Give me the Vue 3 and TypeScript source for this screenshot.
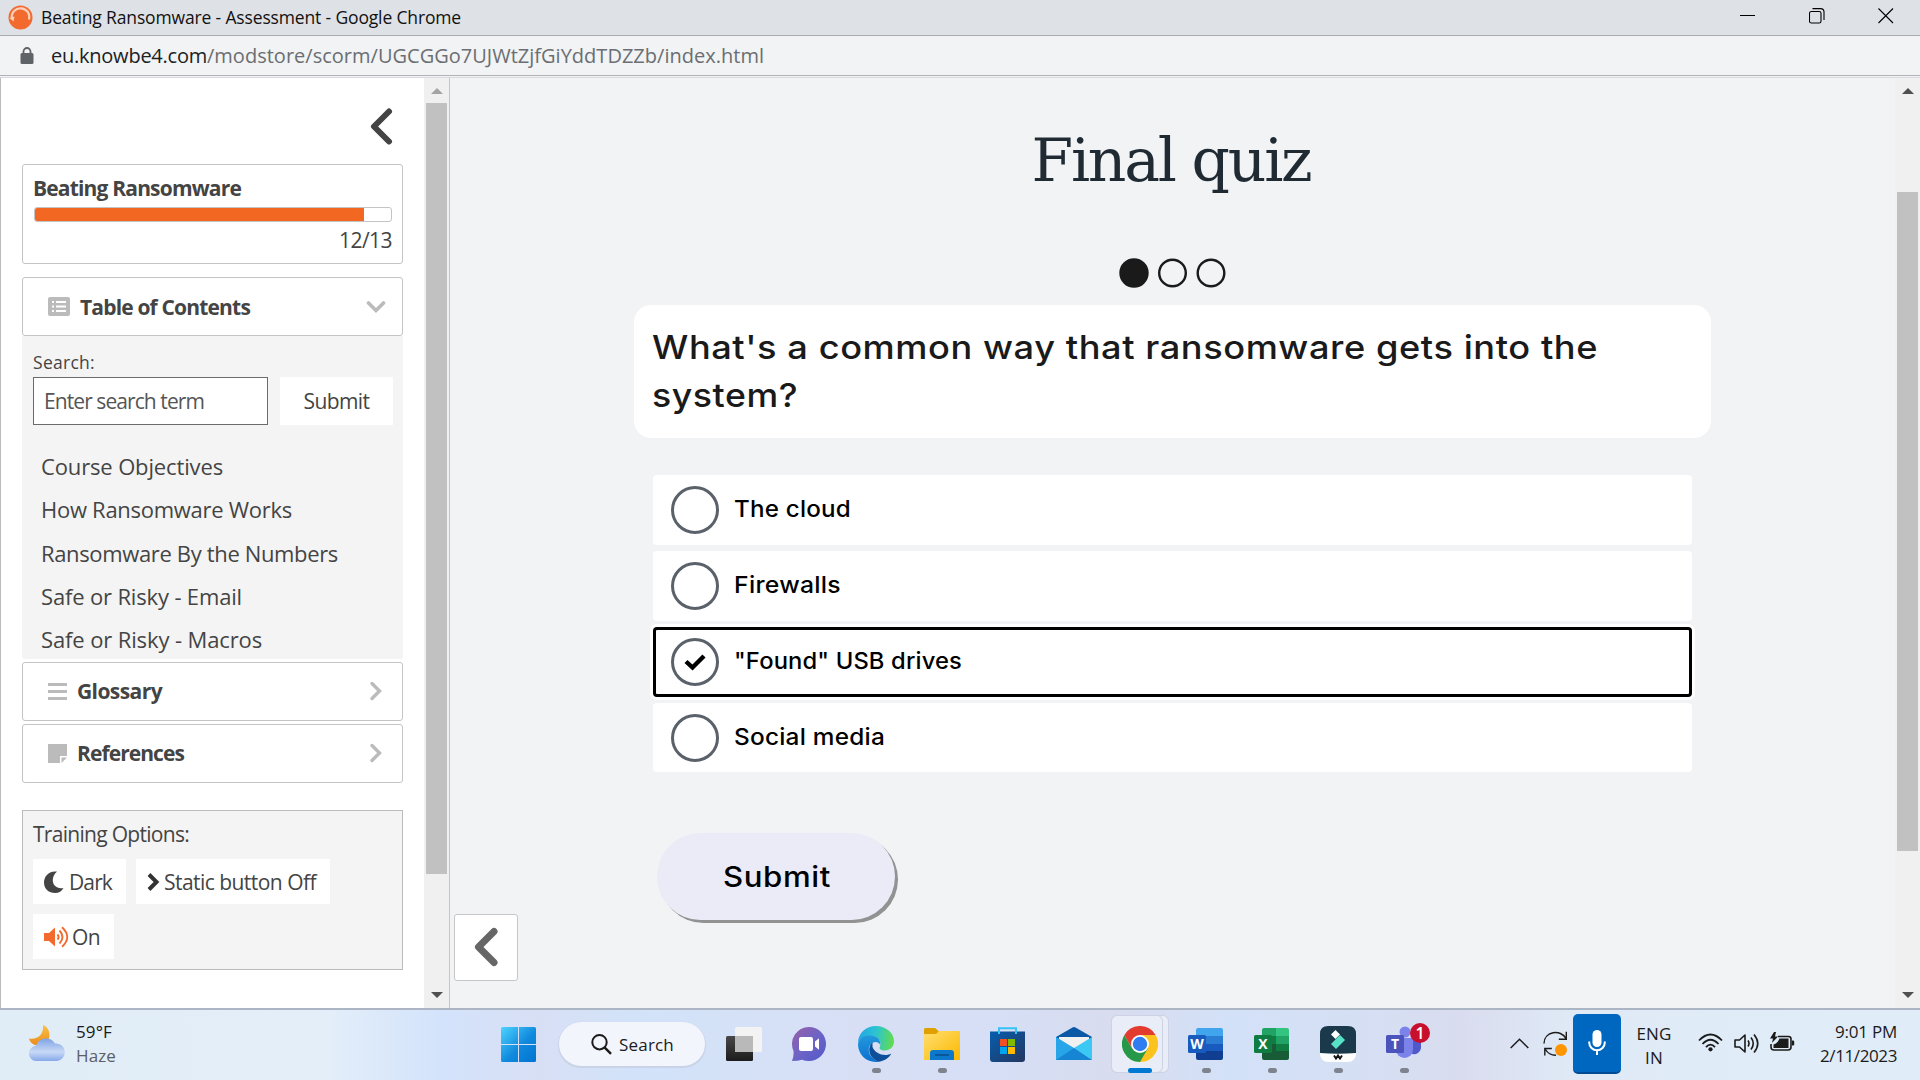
<script setup lang="ts">
import type { Directive } from 'vue'

interface Answer {
  label: string
  width: number
  checked: boolean
}

interface Lesson {
  title: string
  width: number
}

/*
 * Makes a label fill the given number of pixels by tracking its letters.
 * With the "stretch" modifier most of the difference goes into wider glyphs.
 */
const vFit: Directive<HTMLElement, number, 'stretch'> = {
  mounted(el, { value, modifiers }) {
    const count = (el.textContent ?? '').length
    const natural = el.getBoundingClientRect().width
    if (count === 0 || natural === 0) return
    const scale = modifiers.stretch ? 1 + (value / natural - 1) * 0.75 : 1
    el.style.letterSpacing = `${(value / scale - natural) / count}px`
    if (modifiers.stretch) {
      el.style.transformOrigin = '0 50%'
      el.style.transform = `scaleX(${scale})`
    }
  },
}

const lessons: Lesson[] = [
  { title: 'Course Objectives', width: 182 },
  { title: 'How Ransomware Works', width: 251 },
  { title: 'Ransomware By the Numbers', width: 297 },
  { title: 'Safe or Risky - Email', width: 201 },
  { title: 'Safe or Risky - Macros', width: 221 },
]

const answers: Answer[] = [
  { label: 'The cloud', width: 117, checked: false },
  { label: 'Firewalls', width: 107, checked: false },
  { label: '"Found" USB drives', width: 228, checked: true },
  { label: 'Social media', width: 151, checked: false },
]

const progress = { done: 12, total: 13 }
const percent = `${(progress.done / progress.total) * 100}%`
</script>

<template>
  <div class="window">
    <header class="titlebar">
      <svg class="favicon" width="25" height="25" viewBox="0 0 25 25">
        <circle cx="12.5" cy="12.5" r="12" fill="#f26a2e" />
        <path d="M4 14C2.600 7 8 3 13 3.300C19 3.600 22.300 9 21 14.500" fill="none" stroke="#fbd0bb" stroke-width="2.200" />
        <path d="M1.500 13l5-1.500-1 5z" fill="#fbd0bb" />
      </svg>
      <span v-fit="420" class="window-title">Beating Ransomware - Assessment - Google Chrome</span>
      <div class="window-buttons">
        <svg width="16" height="16" viewBox="0 0 16 16"><path d="M0 7.500h15" stroke="#000" /></svg>
        <svg width="16" height="16" viewBox="0 0 16 16" fill="none" stroke="#000" stroke-width="1.100">
          <rect x=".5" y="3.500" width="11.500" height="11.500" rx="1.800" />
          <path d="M3.500 .6H11.500Q15 .6 15 4V12" />
        </svg>
        <svg width="16" height="16" viewBox="0 0 16 16"><path d="M.5 .5l14.500 14.500M15 .5L.5 15" stroke="#000" stroke-width="1.100" /></svg>
      </div>
    </header>

    <div class="address">
      <svg width="14" height="18" viewBox="0 0 14 18">
        <path d="M3.500 7V4.500a3.500 3.500 0 0 1 7 0V7" fill="none" stroke="#5f6368" stroke-width="1.800" />
        <rect x=".5" y="6" width="13" height="11" rx="1.500" fill="#5f6368" />
      </svg>
      <span v-fit="156" class="host">eu.knowbe4.com</span>
      <span v-fit="557" class="path">/modstore/scorm/UGCGGo7UJWtZjfGiYddTDZZb/index.html</span>
    </div>

    <div class="body">
      <aside class="sidebar">
        <div class="collapse">
          <svg width="24" height="37" viewBox="0 0 24 37"><path d="M20 3.500L5 18.500l15 15" fill="none" stroke="#444" stroke-width="6" stroke-linecap="round" stroke-linejoin="round" /></svg>
        </div>

        <section class="card progress-card">
          <div><b v-fit="208" class="fit">Beating Ransomware</b></div>
          <div class="bar"><div class="bar-fill" :style="{ width: percent }"></div></div>
          <div class="count"><span v-fit="53" class="fit">{{ progress.done }}/{{ progress.total }}</span></div>
        </section>

        <section class="card heading toc">
          <svg width="22" height="19" viewBox="0 0 22 19">
            <rect width="22" height="19" rx="2" fill="#bbb" />
            <path d="M4 5h2M4 9.500h2M4 14h2M8 5h10M8 9.500h10M8 14h10" stroke="#fff" stroke-width="2.200" />
          </svg>
          <b v-fit="170" class="fit">Table of Contents</b>
          <svg class="arrow" width="20" height="14" viewBox="0 0 20 14"><path d="M2.500 3L10 10.500 17.500 3" fill="none" stroke="#bbb" stroke-width="3.600" stroke-linecap="round" /></svg>
        </section>

        <section class="panel">
          <div class="search-label"><span v-fit="62" class="fit">Search:</span></div>
          <div class="search-row">
            <div class="input"><span v-fit="160" class="fit">Enter search term</span></div>
            <div class="search-submit"><span v-fit="66" class="fit">Submit</span></div>
          </div>
          <ul class="lessons">
            <li v-for="lesson in lessons" :key="lesson.title"><span v-fit="lesson.width" class="fit">{{ lesson.title }}</span></li>
          </ul>
        </section>

        <section class="card heading glossary">
          <svg width="19" height="17" viewBox="0 0 19 17"><path d="M0 1.500h19M0 8.500h19M0 15.500h19" stroke="#bbb" stroke-width="2.800" /></svg>
          <b v-fit="85" class="fit">Glossary</b>
          <svg class="arrow" width="14" height="20" viewBox="0 0 14 20"><path d="M3 2.500L10.500 10 3 17.500" fill="none" stroke="#bbb" stroke-width="3.400" stroke-linecap="round" /></svg>
        </section>
        <section class="card heading references">
          <svg width="19" height="19" viewBox="0 0 19 19"><path d="M0 0h19v12h-7v7H0zM13.500 13.500H19L13.500 19z" fill="#bbb" /></svg>
          <b v-fit="107" class="fit">References</b>
          <svg class="arrow" width="14" height="20" viewBox="0 0 14 20"><path d="M3 2.500L10.500 10 3 17.500" fill="none" stroke="#bbb" stroke-width="3.400" stroke-linecap="round" /></svg>
        </section>

        <section class="options">
          <div class="options-title"><span v-fit="156" class="fit">Training Options:</span></div>
          <div class="option-row">
            <div class="option">
              <svg width="20" height="22" viewBox="0 0 20 22"><path d="M13 .5C4-.5 0 6 0 11.500C0 18 5 22 11 22C15 22 18 20 19.500 17C9 19 5 8 13 .5z" fill="#444" /></svg>
              <span v-fit="43" class="fit dark">Dark</span>
            </div>
            <div class="option">
              <svg width="13" height="20" viewBox="0 0 13 20"><path d="M2 2.500L9.500 10 2 17.500" fill="none" stroke="#333" stroke-width="4" /></svg>
              <span v-fit="152" class="fit static">Static button Off</span>
            </div>
            <div class="option">
              <svg width="25" height="22" viewBox="0 0 25 22" fill="none" stroke="#f26a2e" stroke-width="1.900">
                <path d="M0 7h5l6-5.500v19L5 15H0z" fill="#f26a2e" stroke="none" />
                <path d="M13.500 8.300q2.300 2.700 0 5.400M15.500 4.500q6 6.500 0 13M18 1.200q10.500 9.800 0 19.600" />
              </svg>
              <span v-fit="28" class="fit on">On</span>
            </div>
          </div>
        </section>
      </aside>

      <div class="scrollbar side-scroll">
        <i class="up"></i>
        <i class="thumb"></i>
        <i class="down"></i>
      </div>

      <main class="main">
        <h1><span v-fit="279" class="fit">Final quiz</span></h1>
        <svg class="steps" width="107" height="30" viewBox="0 0 107 30" fill="none" stroke="#1a1a1a" stroke-width="2.400">
          <circle cx="15" cy="15" r="13.500" fill="#1a1a1a" />
          <circle cx="53.500" cy="15" r="13.300" />
          <circle cx="92" cy="15" r="13.300" />
        </svg>
        <div class="question">
          <div><span v-fit.stretch="946" class="fit">What's a common way that ransomware gets into the</span></div>
          <div><span v-fit.stretch="146" class="fit">system?</span></div>
        </div>
        <div class="answers">
          <div v-for="answer in answers" :key="answer.label" class="answer" :class="{ selected: answer.checked }">
            <span class="radio">
              <svg v-if="answer.checked" width="22" height="17" viewBox="0 0 22 17"><path d="M2 7.500l6.500 6L20 2" fill="none" stroke="#000" stroke-width="4.400" /></svg>
            </span>
            <span v-fit.stretch="answer.width" class="fit">{{ answer.label }}</span>
          </div>
        </div>
        <div class="submit"><span v-fit.stretch="108" class="fit">Submit</span></div>
        <div class="prev">
          <svg width="26" height="40" viewBox="0 0 26 40"><path d="M21 4.500L5.500 20 21 35.500" fill="none" stroke="#666" stroke-width="7" stroke-linecap="round" stroke-linejoin="round" /></svg>
        </div>
      </main>

      <div class="scrollbar main-scroll">
        <i class="up"></i>
        <i class="thumb"></i>
        <i class="down"></i>
      </div>
    </div>

    <footer class="taskbar">
      <div class="weather">
        <svg width="37" height="37" viewBox="0 0 37 37">
          <defs>
            <linearGradient id="moon" x1="0" y1="0" x2="0" y2="1"><stop offset="0" stop-color="#f7c344" /><stop offset="1" stop-color="#ed8a1c" /></linearGradient>
            <linearGradient id="cloud" x1="0" y1="0" x2="0" y2="1"><stop offset="0" stop-color="#7fa3e4" /><stop offset=".6" stop-color="#c8d9f6" /><stop offset="1" stop-color="#86a9ea" /></linearGradient>
          </defs>
          <path d="M14 0C22 3 23 15 15 19.500C8 22.500 1 19 0 13.500C8 15 15 10 14 0z" fill="url(#moon)" />
          <path d="M8 36A7.600 7.600 0 0 1 7 20.800A10.500 10.500 0 0 1 26 18.500A8.800 8.800 0 0 1 28 36z" fill="url(#cloud)" />
        </svg>
        <div class="weather-text">
          <div><span v-fit="36" class="fit">59°F</span></div>
          <div class="muted"><span v-fit="40" class="fit">Haze</span></div>
        </div>
      </div>

      <svg class="start" width="36" height="36" viewBox="0 0 36 36">
        <defs>
          <linearGradient id="win" x1="0" y1="0" x2="1" y2="1"><stop offset="0" stop-color="#4cd3ff" /><stop offset=".55" stop-color="#118add" /><stop offset="1" stop-color="#0073d0" /></linearGradient>
        </defs>
        <path d="M1.500 0H17v17H0V1.500Q0 0 1.500 0zM18 0h15.500Q35 0 35 1.500V17H18zM0 18h17v17H1.500Q0 35 0 33.500zM18 18h17v15.500Q35 35 33.500 35H18z" fill="url(#win)" />
      </svg>

      <div class="search-pill">
        <svg width="21" height="21" viewBox="0 0 21 21" fill="none" stroke="#1b1b1b" stroke-width="2"><circle cx="8.500" cy="8.200" r="7.200" /><path d="M13.500 13.300l6.500 6.500" stroke-width="2.400" /></svg>
        <span v-fit="55" class="fit">Search</span>
      </div>

      <div class="apps">
        <div class="app">
          <svg width="36" height="36" viewBox="0 0 36 36">
            <defs><linearGradient id="tv" x1="0" y1="0" x2="0" y2="1"><stop offset="0" stop-color="#484848" /><stop offset="1" stop-color="#1c1c1c" /></linearGradient></defs>
            <rect x="0" y="10" width="27" height="25" rx="1.500" fill="url(#tv)" />
            <rect x="9" y="1" width="27" height="25" rx="1.500" fill="#f3f3f3" />
            <path d="M9 10h18v16H9z" fill="#b9b9b9" />
          </svg>
        </div>
        <div class="app chat">
          <svg width="36" height="36" viewBox="0 0 36 36">
            <defs><linearGradient id="chat" x1="0" y1="0" x2="1" y2="1"><stop offset="0" stop-color="#9a5fa5" /><stop offset=".5" stop-color="#6d64c6" /><stop offset="1" stop-color="#5259c9" /></linearGradient></defs>
            <path d="M18 1a17 17 0 0 1 0 34q-4 0-7-1.300Q7 35 1 35Q3 31 2.500 25A17 17 0 0 1 18 1z" fill="url(#chat)" />
            <rect x="8" y="11" width="14" height="14" rx="2" fill="#fff" />
            <path d="M24 15.500l4-3.300v11.600l-4-3.300z" fill="#fff" />
          </svg>
        </div>
        <div class="app">
          <svg width="36" height="36" viewBox="0 0 36 36">
            <defs>
              <linearGradient id="edgeA" x1="0" y1=".3" x2="1" y2=".4"><stop offset="0" stop-color="#23a5e6" /><stop offset=".5" stop-color="#2dc4cf" /><stop offset="1" stop-color="#62dc4f" /></linearGradient>
              <linearGradient id="edgeB" x1="0" y1="0" x2="0" y2="1"><stop offset="0" stop-color="#2399dd" /><stop offset="1" stop-color="#0b6fd0" /></linearGradient>
            </defs>
            <path d="M0 17C0 7 8 0 18 0C28 0 36 7 36 15C36 21 32 24.500 27 24.500C23 24.500 20.500 23 22 20.500C24 16 20 10 13 10C7 10 2 12 0 17z" fill="url(#edgeA)" />
            <path d="M0 18C1 12 6 9.500 12 9.500C19 9.500 23 14 22.300 19C20 14 14 15.500 11.500 20C9 26 13 33 21 35.700C9 37.500 0 29 0 18z" fill="url(#edgeB)" />
            <path d="M14.500 16.500C9 21 10 32 21 35.700C27 35 31.500 31 33.500 27.500C27 31 17 28 14.500 21z" fill="#0d4f99" />
          </svg>
          <i class="dot"></i>
        </div>
        <div class="app">
          <svg width="36" height="36" viewBox="0 0 36 36">
            <defs><linearGradient id="folder" x1="0" y1="0" x2="1" y2="1"><stop offset="0" stop-color="#ffde70" /><stop offset="1" stop-color="#fbb900" /></linearGradient></defs>
            <path d="M0 3.500Q0 2 1.500 2H11l4 3.500H34V12H0z" fill="#dfa000" />
            <path d="M0 8h12l3-3h21v29H0z" fill="url(#folder)" />
            <path d="M6 34v-7q0-3 3-3h18q3 0 3 3v7z" fill="#0c78cc" />
            <path d="M11 29h14" stroke="#08508e" stroke-width="1.600" />
          </svg>
          <i class="dot"></i>
        </div>
        <div class="app">
          <svg width="36" height="36" viewBox="0 0 36 36">
            <defs><linearGradient id="store" x1="0" y1="0" x2="1" y2="1"><stop offset="0" stop-color="#075eaf" /><stop offset="1" stop-color="#23365f" /></linearGradient></defs>
            <path d="M0 5.500h35V33q0 3-3 3H3q-3 0-3-3z" fill="url(#store)" />
            <path d="M9 8V2.200h17V8" fill="none" stroke="#34c3f5" stroke-width="2" />
            <path d="M10 13h7v7h-7z" fill="#f25022" /><path d="M18 13h7v7h-7z" fill="#7fba00" />
            <path d="M10 21h7v7h-7z" fill="#00a4ef" /><path d="M18 21h7v7h-7z" fill="#ffb900" />
          </svg>
        </div>
        <div class="app">
          <svg width="36" height="36" viewBox="0 0 36 36">
            <path d="M0 11L16.500 1.500q1.500-.8 3 0L36 11v5H0z" fill="#0a58a6" />
            <path d="M3 11h30v8L18 26 3 19z" fill="#f1f1f1" />
            <path d="M0 11l18 11L36 34H0z" fill="#27a5e8" /><path d="M36 11v23L18 22z" fill="#3cc8f4" /><path d="M0 34L18 22l18 12z" fill="#1685d3" />
          </svg>
        </div>
        <div class="app active">
          <svg width="36" height="36" viewBox="0 0 36 36">
            <path d="M18 18L2.400 9A18 18 0 0 1 33.600 9z" fill="#e33b2e" />
            <path d="M18 18V9H33.600A18 18 0 0 1 18 36z" fill="#fcc31e" />
            <path d="M2.400 9A18 18 0 0 0 18 36L25.800 22.500 18 18 10.200 22.500z" fill="#279847" />
            <path d="M2.400 9L10.200 22.500 18 9z" fill="#e33b2e" />
            <circle cx="18" cy="18" r="9" fill="#fff" /><circle cx="18" cy="18" r="7.200" fill="#2f7df0" />
          </svg>
          <i class="dot wide"></i>
        </div>
        <div class="app">
          <svg width="36" height="36" viewBox="0 0 36 36">
            <path d="M8 4q0-2 2-2h23q2 0 2 2v6H8z" fill="#41a5ee" /><path d="M8 10h27v8H8z" fill="#2b7cd3" /><path d="M8 18h27v7H8z" fill="#185abd" /><path d="M8 25h27v7q0 2-2 2H10q-2 0-2-2z" fill="#103f91" />
            <rect x="0" y="9" width="18" height="18" rx="1.500" fill="#185abd" />
            <text x="9" y="23" text-anchor="middle" class="glyph">W</text>
          </svg>
          <i class="dot"></i>
        </div>
        <div class="app">
          <svg width="36" height="36" viewBox="0 0 36 36">
            <path d="M8 4q0-2 2-2h12v8H8z" fill="#21a366" /><path d="M22 2h11q2 0 2 2v6H22z" fill="#33c481" /><path d="M8 10h14v8H8z" fill="#107c41" /><path d="M22 10h13v8H22z" fill="#21a366" /><path d="M22 18h13v7H22z" fill="#107c41" /><path d="M8 18h14v7h13v7q0 2-2 2H10q-2 0-2-2z" fill="#185c37" />
            <rect x="0" y="9" width="18" height="18" rx="1.500" fill="#107c41" />
            <text x="9" y="23" text-anchor="middle" class="glyph">X</text>
          </svg>
          <i class="dot"></i>
        </div>
        <div class="app">
          <svg width="36" height="36" viewBox="0 0 36 36">
            <rect width="36" height="36" rx="8" fill="#fff" />
            <path d="M0 27V8Q0 0 8 0h20q8 0 8 8v19q-18 1.500-36 0z" fill="#1a394b" />
            <path d="M15.500 4l4.500 4.500-4.500 4.500L11 8.500z" fill="#fff" />
            <path d="M20 9l5 5-9 9-5-5z" fill="#56e3c6" />
            <path d="M14 29.500l2 3 2-3 2 3 2-3" fill="none" stroke="#111" stroke-width="1.900" />
          </svg>
          <i class="dot"></i>
        </div>
        <div class="app">
          <svg class="teams" width="46" height="42" viewBox="0 0 46 42">
            <circle cx="19" cy="12" r="5.500" fill="#7b83eb" />
            <path d="M25 18h10v9.500a7 7 0 0 1-10 6z" fill="#5059c9" />
            <path d="M10 18h17v11.500a8.500 8.500 0 0 1-17 0z" fill="#7b83eb" />
            <rect x="0" y="15" width="18" height="18" rx="1.500" fill="#4b53bc" />
            <text x="9" y="29" text-anchor="middle" class="glyph">T</text>
            <circle cx="34" cy="13" r="10" fill="#c8102e" />
            <text x="34" y="19" text-anchor="middle" class="badge">1</text>
          </svg>
          <i class="dot"></i>
        </div>
      </div>

      <div class="tray">
        <svg class="caret" width="19" height="11" viewBox="0 0 19 11"><path d="M.7 10L9.500 1.200 18.300 10" fill="none" stroke="#1b1b1b" stroke-width="1.500" /></svg>
        <svg class="sync" width="25" height="26" viewBox="0 0 25 26" fill="none" stroke="#1b1b1b" stroke-width="1.400">
          <path d="M1 12.500C1 0 18 -2 23 7.500M23.300 .8v7.500h-7.500M1.800 24.500V17.500h7M2.500 18.500Q6 24.500 13 24.300" />
          <circle cx="18" cy="19" r="6" fill="#ff9500" stroke="none" />
        </svg>
        <div class="mic">
          <svg width="18" height="26" viewBox="0 0 18 26"><rect x="4.500" y="0" width="9" height="17" rx="4.500" fill="#fff" /><path d="M1.200 11.500v1a7.800 7.800 0 0 0 15.600 0v-1M9 20v5" fill="none" stroke="#fff" stroke-width="2" /></svg>
        </div>
        <div class="lang">
          <div><span v-fit="35" class="fit">ENG</span></div>
          <div><span v-fit="18" class="fit">IN</span></div>
        </div>
        <svg class="wifi" width="25" height="19" viewBox="0 0 25 19" fill="none" stroke="#1b1b1b" stroke-width="1.800">
          <path d="M1 7.500Q12.500-4.500 24 7.500M4.500 11Q12.500 2.500 20.500 11M8 14.200Q12.500 9 17 14.200" /><circle cx="12.500" cy="16.300" r="2.100" fill="#1b1b1b" stroke="none" />
        </svg>
        <svg class="vol" width="25" height="21" viewBox="0 0 25 21" fill="none" stroke="#1b1b1b" stroke-width="1.600">
          <path d="M1 7h4.500L11 2v17l-5.500-5H1zM14 7.500q2 3 0 6M17 4.500q4.500 6 0 12M20 1.500q7.500 9 0 18" stroke-linejoin="round" />
        </svg>
        <svg class="battery" width="25" height="20" viewBox="0 0 25 20">
          <path d="M8 4.500H18.500Q21 4.500 21 7v8q0 3-3 3H4q-3 0-3-3v-3" fill="none" stroke="#1b1b1b" stroke-width="1.600" />
          <path d="M22 8.500h1q1.200 0 1.200 1.200v2.500q0 1.200-1.200 1.200h-1z" fill="#1b1b1b" />
          <path d="M9.500 6.500h9v9.500h-15v-3.500q4-1 6-6zM4 0L0 6.500h3L2 11l6-6.500H5L6 0z" fill="#1b1b1b" />
        </svg>
        <div class="clock">
          <div><span v-fit="62" class="fit">9:01 PM</span></div>
          <div><span v-fit="77" class="fit">2/11/2023</span></div>
        </div>
      </div>
    </footer>
  </div>
</template>

<style>
body {
  margin: 0;
  overflow: hidden;
}
</style>

<style scoped>
* {
  box-sizing: border-box;
}
.window {
  display: flex;
  flex-direction: column;
  width: 1920px;
  height: 1080px;
  overflow: hidden;
  background: #f2f3f5;
  color: #444;
  font-family: 'Open Sans', 'Noto Sans', sans-serif;
  font-size: 21px;
}
svg {
  display: block;
  flex: none;
}
span,
b {
  white-space: nowrap;
}
.fit {
  display: inline-block;
}
.titlebar {
  display: flex;
  align-items: center;
  flex: none;
  height: 36px;
  padding-left: 8px;
  border-bottom: 1px solid #a9abaf;
  background: #dee1e6;
  color: #111;
  font-size: 17.500px;
}
.favicon {
  margin-top: -1px;
}
.window-title {
  margin: -1px 0 0 8px;
}
.window-buttons {
  display: flex;
  gap: 53px;
  margin: -4px 26px 0 auto;
}
.address {
  display: flex;
  align-items: center;
  flex: none;
  height: 42px;
  padding: 0 0 2px 20px;
  border-bottom: 1px solid #d9dadd;
  background: linear-gradient(#b1b2b5, #b1b2b5) 0 39px / 100% 1px no-repeat #f1f3f4;
  color: #202124;
  font-size: 20px;
}
.host {
  margin-left: 17px;
}
.path {
  color: #6b6e72;
}
.body {
  display: flex;
  flex: none;
  height: 930px;
}
.sidebar {
  width: 424px;
  padding: 30px 20px 0 21px;
  border-left: 1px solid #bbb;
  background: #fff;
}
.collapse {
  display: flex;
  justify-content: flex-end;
  height: 56px;
  padding-right: 11px;
}
.card {
  width: 381px;
  border: 1px solid #c4c4c4;
  border-radius: 3px;
  background: #fff;
}
.progress-card {
  height: 100px;
  padding: 9px 10px 0 11px;
  line-height: 28px;
}
.progress-card b {
  margin-left: -1px;
}
.bar {
  height: 15px;
  margin: 5px 0 4px;
  border: 1px solid #c4c4c4;
  border-radius: 3px;
}
.bar-fill {
  height: 13px;
  border-radius: 2px 0 0 2px;
  background: #f26722;
}
.count {
  text-align: right;
}
.heading {
  display: flex;
  align-items: center;
  height: 59px;
  margin-top: 3px;
  padding: 0 19px 0 25px;
}
.heading b {
  margin-left: 10px;
}
.heading .arrow {
  margin-left: auto;
}
.toc {
  margin-top: 13px;
  padding-right: 16px;
}
.glossary,
.references {
  padding-bottom: 1px;
}
.panel {
  width: 381px;
  height: 323px;
  padding: 14px 10px 0 11px;
  overflow: hidden;
  border-radius: 0 0 3px 3px;
  background: #f4f4f4;
}
.search-label {
  height: 27px;
  font-size: 17.500px;
  font-weight: 500;
  line-height: 24px;
}
.search-row {
  display: flex;
  justify-content: space-between;
}
.input {
  width: 235px;
  height: 48px;
  padding-left: 10px;
  border: 1px solid #6b6b6b;
  background: #fff;
  color: #555;
  line-height: 47px;
}
.search-submit {
  width: 113px;
  height: 48px;
  background: #fff;
  line-height: 49px;
  text-align: center;
}
.lessons {
  margin: 20px 0 0;
  padding: 0 0 0 8px;
  list-style: none;
  font-size: 22px;
  line-height: 43.300px;
}
.lessons li {
  height: 43.300px;
}
.options {
  width: 381px;
  height: 160px;
  margin-top: 27px;
  padding: 9px 10px 8px;
  border: 1px solid #bbb;
  background: #f4f4f4;
}
.options-title {
  height: 39px;
  line-height: 28px;
}
.option-row {
  display: flex;
  flex-wrap: wrap;
  gap: 10px;
}
.option {
  display: flex;
  align-items: center;
  height: 45px;
  padding: 0 14px 0 11px;
  background: #fff;
}
.dark {
  margin-left: 5px;
}
.static {
  margin-left: 4px;
}
.on {
  margin-left: 3px;
}
.scrollbar {
  display: flex;
  flex-direction: column;
  align-items: center;
  flex: none;
  width: 25px;
  background: #f0f0f0;
}
.side-scroll {
  width: 26px;
  border-right: 1px solid #c6c6c6;
}
.up,
.down {
  width: 0;
  height: 0;
  border: 6px solid transparent;
}
.up {
  margin-top: 10px;
  border-top: 0;
  border-bottom-color: #505050;
}
.side-scroll .up {
  border-bottom-color: #a3a3a3;
}
.down {
  margin: auto 0 10px;
  border-bottom: 0;
  border-top-color: #505050;
}
.thumb {
  width: 21px;
  background: #c1c1c1;
}
.side-scroll .thumb {
  height: 771px;
  margin-top: 9px;
}
.main-scroll .thumb {
  height: 659px;
  margin-top: 98px;
}
.main {
  position: relative;
  display: flex;
  flex-direction: column;
  align-items: center;
  flex: 1;
}
h1 {
  height: 80px;
  margin: 42px 3px 58px 0;
  color: #1f2a33;
  font: 400 60px/80px 'DejaVu Serif', serif;
}
.question {
  width: 1077px;
  height: 133px;
  margin-top: 17px;
  padding: 18px 18px;
  border-radius: 17px;
  background: #fff;
  color: #1a1a1a;
  font: 470 33px/48px Inter, sans-serif;
}
.answers {
  display: flex;
  flex-direction: column;
  gap: 6px;
  margin-top: 37px;
}
.answer {
  display: flex;
  align-items: center;
  width: 1039px;
  height: 70px;
  padding-left: 18px;
  border-radius: 4px;
  background: #fff;
  color: #000;
  font: 450 23px/68px Inter, sans-serif;
}
.answer:last-child {
  height: 69px;
}
.answer .fit {
  margin: -2px 0 0 15px;
}
.selected {
  padding-left: 15px;
  border: 3px solid #000;
  box-shadow: 0 0 0 3px #fff;
}
.radio {
  display: flex;
  align-items: center;
  justify-content: center;
  width: 48px;
  height: 48px;
  border: 3px solid #5b616b;
  border-radius: 50%;
}
.submit {
  align-self: flex-start;
  width: 238px;
  height: 87px;
  margin: 61px 0 0 207px;
  padding-left: 66px;
  border-radius: 44px;
  background: #ebebf8;
  box-shadow: 3px 3px 0 #929292;
  color: #000;
  font: 450 28px/88px Inter, sans-serif;
}
.prev {
  position: absolute;
  left: 4px;
  bottom: 27px;
  display: flex;
  align-items: center;
  justify-content: center;
  width: 64px;
  height: 67px;
  padding-bottom: 1px;
  border: 1px solid #c6c6c6;
  border-radius: 3px;
  background: #fff;
}
.taskbar {
  display: flex;
  flex: none;
  height: 72px;
  border-top: 2px solid #abb5c4;
  background: linear-gradient(90deg, #e0ecf6, #e3eef9 17%, #d3e3fb 23%, #d8dff5 28%, #d2e3f9 33%, #d8dff5 45%, #d6dff6 52%, #d8dcee 58%, #d3e1f8 64%, #d6dff3 72%, #d9dcef 76%, #dfeaf6 82%, #e0edf8);
  color: #1b1b1b;
  font-size: 17px;
}
.weather {
  display: flex;
  width: 501px;
  padding: 15px 0 0 29px;
}
.weather-text {
  margin: -5px 0 0 10px;
}
.weather-text,
.lang,
.clock {
  line-height: 24px;
}
.muted {
  color: #5c6065;
}
.start {
  margin-top: 17px;
}
.search-pill {
  display: flex;
  align-items: center;
  width: 146px;
  height: 44px;
  margin: 12px 6px 0 22px;
  padding-left: 32px;
  border-radius: 22px;
  background: #f2f5fc;
  box-shadow: 0 1px 1px 1px #c9d2e6;
}
.search-pill .fit {
  margin-left: 7px;
}
.apps {
  display: flex;
}
.app {
  position: relative;
  display: flex;
  justify-content: center;
  width: 66px;
  padding-top: 16px;
}
.app svg {
  position: relative;
}
.chat {
  padding-right: 2px;
}
.active::before,
.active::after {
  content: '';
  position: absolute;
  left: 5px;
  top: 6px;
  width: 50px;
  height: 56px;
  border-radius: 5px;
  background: #e9edf8;
  box-shadow: 0 0 0 1px #cdd3e4;
}
.active::before {
  width: 56px;
}
.active svg,
.active .dot {
  z-index: 1;
}
.teams {
  left: 5px;
  top: -6px;
}
.dot {
  position: absolute;
  left: 29px;
  top: 58px;
  width: 9px;
  height: 5px;
  border-radius: 3px;
  background: #7e838e;
}
.wide {
  left: 21px;
  width: 24px;
  background: #0078d4;
}
.glyph {
  fill: #fff;
  font: 700 14px 'Open Sans', sans-serif;
}
.badge {
  fill: #fff;
  font: 600 16px 'Open Sans', sans-serif;
}
.tray {
  display: flex;
  flex: 1;
  padding-left: 73px;
}
.caret {
  margin-top: 28px;
}
.sync {
  margin: 21px 0 0 14px;
}
.mic {
  display: flex;
  align-items: center;
  justify-content: center;
  width: 48px;
  height: 60px;
  margin: 4px 0 0 5px;
  border-radius: 5px;
  border-bottom: 2px solid #004c92;
  background: #0067c0;
}
.lang {
  width: 66px;
  padding-top: 12px;
  text-align: center;
}
.wifi {
  margin: 23px 0 0 11px;
}
.vol {
  margin: 23px 0 0 11px;
}
.battery {
  margin: 22px 0 0 11px;
}
.clock {
  flex: 1;
  padding: 10px 23px 0 0;
  text-align: right;
}
</style>
